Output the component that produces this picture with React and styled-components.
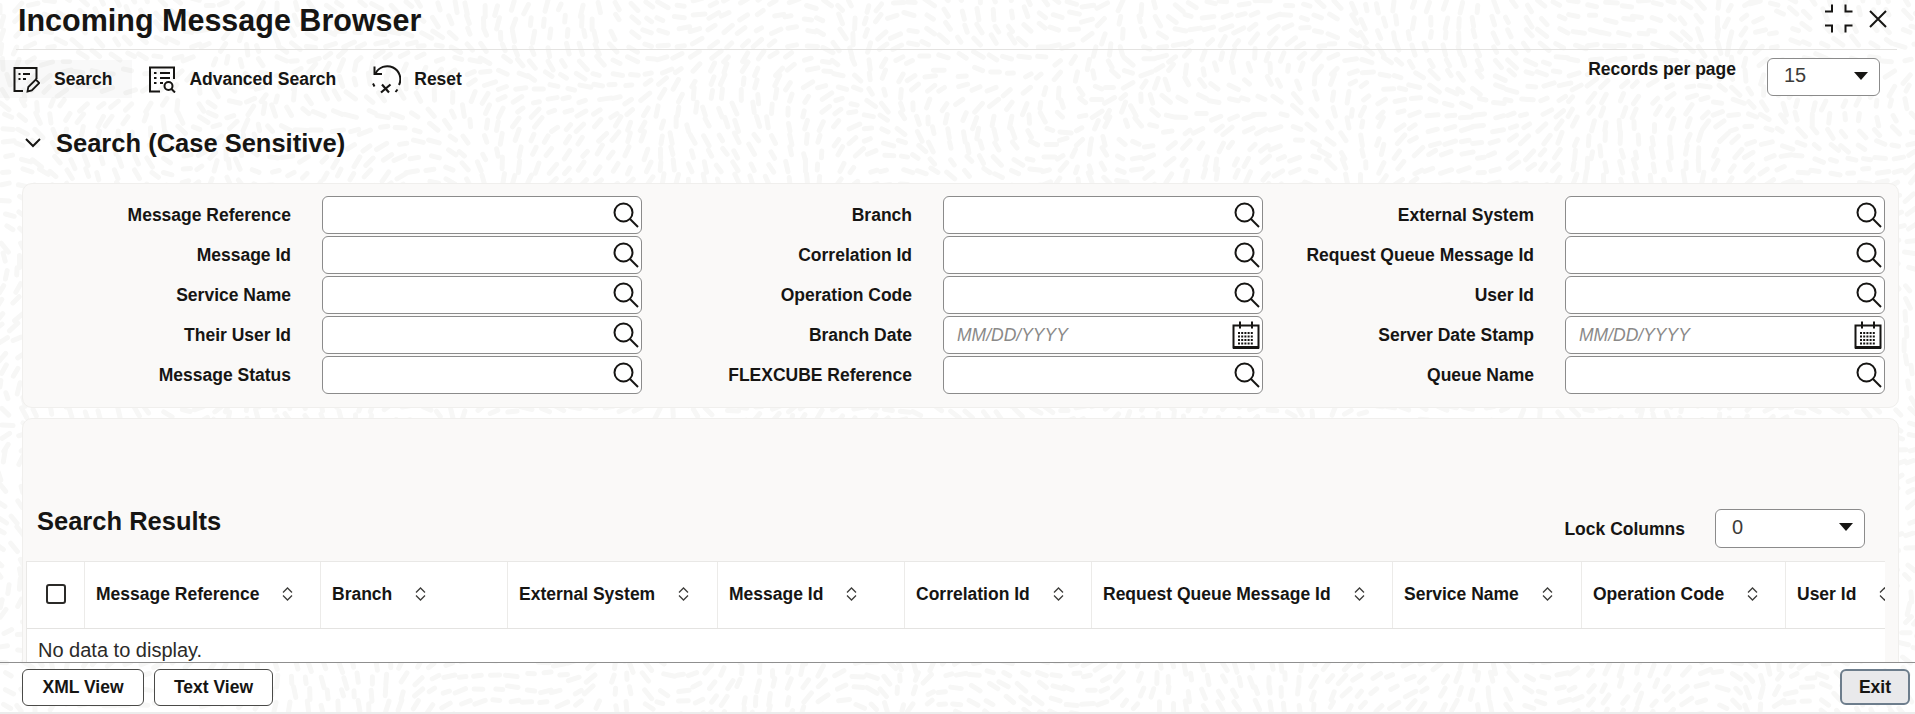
import React, { useMemo } from 'react'
import styled, { createGlobalStyle } from 'styled-components'

const GlobalStyle = createGlobalStyle`
  html, body { margin: 0; padding: 0; background: #fff; }
  body {
    font-family: "Liberation Sans", Arial, sans-serif;
    color: #161513;
  }
`;

const Page = styled.div`
  position: relative;
  width: 1915px;
  height: 714px;
  display: flex;
  flex-direction: column;
  overflow: hidden;
`;

const Backdrop = styled.svg`
  position: absolute;
  inset: 0;
  z-index: 0;
`;

const Main = styled.main`
  position: relative;
  flex: 1;
  min-height: 0;
  overflow: hidden;
`;

const TitleBar = styled.header`
  height: 49px;
  margin: 0 18px 0 16px;
  border-bottom: 1px solid #e4e3e1;
  display: flex;
  align-items: center;
  justify-content: space-between;
  padding: 0 10px 0 2px;
`;

const Title = styled.h1`
  margin: 0 0 10px;
  font-size: 30.5px;
  line-height: 40px;
  font-weight: 700;
`;

const WindowIcons = styled.div`
  display: flex;
  align-items: center;
  gap: 16px;
  margin-bottom: 12px;
`;

const Toolbar = styled.div`
  margin-top: 10px;
  height: 38px;
  display: flex;
  align-items: flex-start;
  justify-content: space-between;
  padding-right: 35px;
`;

const Actions = styled.div`
  display: flex;
`;

const Action = styled.div`
  height: 38px;
  display: flex;
  align-items: center;
  gap: ${(props) => (props.$active ? "14px" : "13px")};
  padding: ${(props) => (props.$active ? "0 20px 0 13px" : "0 19px 0 17px")};
  background: ${(props) => (props.$active ? "rgba(0,0,0,0.025)" : "transparent")};
  font-size: 17.5px;
  font-weight: 700;
`;

const RecordsBox = styled.div`
  display: flex;
  align-items: flex-start;
  gap: 31px;
  margin-top: -2px;
`;

const SideLabel = styled.span`
  font-size: 17.5px;
  font-weight: 700;
  line-height: 22px;
`;

const SelectBox = styled.div`
  box-sizing: border-box;
  width: ${(props) => props.$width};
  height: ${(props) => props.$height};
  border: 1px solid #8b8b8b;
  border-radius: 6px;
  background: #fff;
  display: flex;
  align-items: center;
  justify-content: space-between;
  padding: 0 11px 3px 16px;
  font-size: 20px;
  color: #3d3c3a;
`;

const Caret = styled.span`
  width: 0;
  height: 0;
  border-left: 7px solid transparent;
  border-right: 7px solid transparent;
  border-top: 8px solid #161513;
`;

const SectionHead = styled.div`
  margin-top: 30px;
  height: 30px;
  display: flex;
  align-items: center;
  gap: 14px;
  padding-left: 24px;
`;

const SectionTitle = styled.h2`
  margin: 0;
  font-size: 25.5px;
  font-weight: 700;
  line-height: 30px;
`;

const SearchPanel = styled.section`
  box-sizing: border-box;
  margin: 25px 16px 0 22px;
  height: 225px;
  padding-top: 12px;
  background: #faf9f8;
  border: 1px solid #f0efed;
  border-radius: 10px;
  display: grid;
  grid-template-columns: 621px 622px 621px;
  grid-auto-rows: 38px;
  row-gap: 2px;
`;

const Field = styled.div`
  display: flex;
  align-items: center;
  gap: 31px;
`;

const FieldLabel = styled.label`
  width: 268px;
  text-align: right;
  font-size: 17.5px;
  font-weight: 700;
  white-space: nowrap;
`;

const InputWrap = styled.div`
  box-sizing: border-box;
  width: 320px;
  height: 38px;
  background: #fff;
  border: 1px solid #8b8b8b;
  border-radius: 6px;
  display: flex;
  align-items: center;
  padding: 0 2px 0 13px;
`;

const Input = styled.input`
  flex: 1;
  min-width: 0;
  border: none;
  outline: none;
  background: transparent;
  padding: 0;
  font-family: inherit;
  font-size: 17.5px;
  &::placeholder {
    color: #8a8988;
    font-style: italic;
    opacity: 1;
  }
`;

const ResultsPanel = styled.section`
  box-sizing: border-box;
  margin: 10px 16px 0 22px;
  height: 300px;
  padding: 90px 13px 0 3px;
  background: #faf9f8;
  border: 1px solid #f0efed;
  border-radius: 10px 10px 0 0;
`;

const ResultsHead = styled.div`
  height: 39px;
  margin-bottom: 13px;
  display: flex;
  justify-content: space-between;
  align-items: flex-start;
  padding: 0 20px 0 11px;
`;

const ResultsTitle = styled.h2`
  margin: 0;
  font-size: 25.5px;
  line-height: 25px;
  font-weight: 700;
`;

const LockBox = styled.div`
  display: flex;
  align-items: center;
  gap: 30px;
`;

const Table = styled.div`
  background: #fff;
  border: 1px solid #e9e8e6;
  border-right: none;
  overflow: hidden;
  height: 120px;
`;

const HeaderRow = styled.div`
  display: flex;
  height: 66px;
  border-bottom: 1px solid #e4e3e1;
`;

const HeaderCell = styled.div`
  box-sizing: border-box;
  flex: none;
  width: ${(props) => props.$width}px;
  display: flex;
  align-items: center;
  gap: 23px;
  padding: 0 0 2px 11px;
  border-right: 1px solid #ecebe9;
  font-size: 17.5px;
  font-weight: 700;
  white-space: nowrap;
`;

const CheckCell = styled.div`
  box-sizing: border-box;
  flex: none;
  width: 58px;
  display: flex;
  align-items: center;
  justify-content: center;
  padding-bottom: 2px;
  border-right: 1px solid #ecebe9;
`;

const CheckBox = styled.span`
  box-sizing: border-box;
  width: 20px;
  height: 20px;
  border: 2px solid #2b2a28;
  border-radius: 3px;
`;

const EmptyRow = styled.div`
  padding-left: 11px;
  font-size: 20px;
  line-height: 42px;
  color: #2b2a28;
`;

const Footer = styled.footer`
  position: relative;
  box-sizing: border-box;
  height: 50px;
  border-top: 1px solid #8f8f8f;
  display: flex;
  align-items: center;
  justify-content: space-between;
  padding: 0 5px 1px 22px;
`;

const FooterLeft = styled.div`
  display: flex;
  gap: 10px;
`;

const FooterButton = styled.button`
  box-sizing: border-box;
  width: ${(props) => props.$width};
  height: 37px;
  border: 1px solid #4a4a48;
  border-radius: 6px;
  background: #fff;
  padding: 0;
  font-family: inherit;
  font-size: 17.5px;
  font-weight: 700;
  color: #161513;
`;

const ExitButton = styled(FooterButton)`
  width: 70px;
  height: 36px;
  border: 2px solid #6d7d8c;
  background: #e9e9eb;
`;

const BottomBand = styled.div`
  position: relative;
  height: 2px;
  background: #ececec;
`;

const SearchGlyph = () => (
  <svg width="26" height="26" viewBox="0 0 26 26" fill="none" stroke="#161513" strokeWidth="2">
    <circle cx="10.500" cy="10.500" r="9" />
    <path d="M17 17l8 8" />
  </svg>
);

const CalendarGlyph = () => (
  <svg width="28" height="28" viewBox="0 0 28 28" fill="none" stroke="#161513">
    <path d="M1.500 4.500h25v22h-25z" strokeWidth="2" />
    <path d="M1 26.500h26" strokeWidth="3" />
    <path d="M8 0.500v7M20 0.500v7" strokeWidth="2" />
    <path d="M6 12h16M6 15.500h16M6 19h16M6 22.500h16" strokeWidth="2" strokeDasharray="2 1.200" />
  </svg>
);

const FormPenIcon = () => (
  <svg width="27" height="27" viewBox="0 0 27 27" fill="none" stroke="#161513" strokeWidth="2">
    <path d="M10 25H1.500V2H23.500V13" />
    <path d="M5.500 8h2M10 8h7M5.500 13h2M10 13h3" />
    <path d="M14.500 25.500l.8-4.500 7.500-7.500 3.500 3.500-7.500 7.500z" strokeWidth="1.800" />
  </svg>
);

const FormSearchIcon = () => (
  <svg width="27" height="27" viewBox="0 0 27 27" fill="none" stroke="#161513" strokeWidth="2">
    <path d="M11 25.500H1V1.500H25V13" />
    <path d="M5 7h2.500M11 7h10M5 12h2.500M11 12h10M5 17h2.500M11 17h3" />
    <circle cx="19.500" cy="20" r="4" />
    <path d="M22.500 23l3.500 3.500" />
  </svg>
);

const ResetIcon = () => (
  <svg width="29" height="29" viewBox="0 0 29 29" fill="none" stroke="#161513" strokeWidth="2">
    <path d="M3.500 8.500A12.500 12.500 0 0 1 27 20" />
    <path d="M2.500 1.500v7.500h7.500" />
    <path d="M1 18.500l1.500 3M25.500 24.500l-2 2.500" />
    <path d="M10 19.500l7 8M18.500 19.500l-9.500 8" strokeWidth="2.200" />
  </svg>
);

const CollapseIcon = () => (
  <svg width="29" height="29" viewBox="0 0 29 29" fill="none" stroke="#161513" strokeWidth="2">
    <path d="M1 7.500h7V0.500M21.500 0.500v7h7M1 21.500h7v7M21.500 28.500v-7h7" />
  </svg>
);

const CloseIcon = () => (
  <svg width="18" height="18" viewBox="0 0 18 18" fill="none" stroke="#161513" strokeWidth="2">
    <path d="M1 1l16 16M17 1L1 17" />
  </svg>
);

const ChevronIcon = () => (
  <svg width="18" height="10" viewBox="0 0 18 10" fill="none" stroke="#161513" strokeWidth="2">
    <path d="M2 1l7 7 7-7" />
  </svg>
);

const SortIcon = () => (
  <svg width="11" height="14" viewBox="0 0 11 14" fill="none" stroke="#3d3c3a" strokeWidth="1.300" style={{ flex: 'none' }}>
    <path d="M1 5.500L5.500 1 10 5.500M1 8.500L5.500 13 10 8.500" />
  </svg>
);

// light dashes that follow a slow swirl, same look as the page texture
const buildTexture = () => {
  let seed = 7;
  const rnd = () => {
    seed = (seed * 16807) % 2147483647;
    return seed / 2147483647;
  };
  let d = "";
  for (let y = 0; y < 730; y += 14) {
    for (let x = 0; x < 1930; x += 16) {
      const px = x + rnd() * 8;
      const py = y + rnd() * 6;
      const a =
        Math.sin(px / 70) * 1.6 +
        Math.cos(py / 55) * 1.6 +
        Math.sin((px + py) / 130) * 1.4 +
        (rnd() - 0.5) * 0.35;
      const len = 6 + rnd() * 6;
      const dx = Math.cos(a) * len;
      const dy = Math.sin(a) * len;
      d += `M${px.toFixed(1)} ${py.toFixed(1)}l${dx.toFixed(1)} ${dy.toFixed(1)}`;
    }
  }
  return d;
};

const fields = [
  { label: "Message Reference" },
  { label: "Branch" },
  { label: "External System" },
  { label: "Message Id" },
  { label: "Correlation Id" },
  { label: "Request Queue Message Id" },
  { label: "Service Name" },
  { label: "Operation Code" },
  { label: "User Id" },
  { label: "Their User Id" },
  { label: "Branch Date", date: true },
  { label: "Server Date Stamp", date: true },
  { label: "Message Status" },
  { label: "FLEXCUBE Reference" },
  { label: "Queue Name" },
];

const columns = [
  { name: "Message Reference", width: 236 },
  { name: "Branch", width: 187 },
  { name: "External System", width: 210 },
  { name: "Message Id", width: 187 },
  { name: "Correlation Id", width: 187 },
  { name: "Request Queue Message Id", width: 301 },
  { name: "Service Name", width: 189 },
  { name: "Operation Code", width: 204 },
  { name: "User Id", width: 140 },
];

function App() {
  const texture = useMemo(buildTexture, []);

  return (
    <Page>
      <GlobalStyle />
      <Backdrop width="1915" height="714" aria-hidden="true">
        <path d={texture} stroke="#f7f7f6" strokeWidth="5" strokeLinecap="round" fill="none" />
      </Backdrop>
      <Main>
        <TitleBar>
          <Title>Incoming Message Browser</Title>
          <WindowIcons>
            <CollapseIcon />
            <CloseIcon />
          </WindowIcons>
        </TitleBar>

        <Toolbar>
          <Actions>
            <Action $active>
              <FormPenIcon />
              Search
            </Action>
            <Action>
              <FormSearchIcon />
              Advanced Search
            </Action>
            <Action>
              <ResetIcon />
              Reset
            </Action>
          </Actions>
          <RecordsBox>
            <SideLabel>Records per page</SideLabel>
            <SelectBox $width="113px" $height="38px">
              15
              <Caret />
            </SelectBox>
          </RecordsBox>
        </Toolbar>

        <SectionHead>
          <ChevronIcon />
          <SectionTitle>Search (Case Sensitive)</SectionTitle>
        </SectionHead>

        <SearchPanel>
          {fields.map((f) => (
            <Field key={f.label}>
              <FieldLabel>{f.label}</FieldLabel>
              <InputWrap>
                <Input placeholder={f.date ? "MM/DD/YYYY" : undefined} />
                {f.date ? <CalendarGlyph /> : <SearchGlyph />}
              </InputWrap>
            </Field>
          ))}
        </SearchPanel>

        <ResultsPanel>
          <ResultsHead>
            <ResultsTitle>Search Results</ResultsTitle>
            <LockBox>
              <SideLabel>Lock Columns</SideLabel>
              <SelectBox $width="150px" $height="39px">
                0
                <Caret />
              </SelectBox>
            </LockBox>
          </ResultsHead>
          <Table>
            <HeaderRow>
              <CheckCell>
                <CheckBox />
              </CheckCell>
              {columns.map((c) => (
                <HeaderCell key={c.name} $width={c.width}>
                  {c.name}
                  <SortIcon />
                </HeaderCell>
              ))}
            </HeaderRow>
            <EmptyRow>No data to display.</EmptyRow>
          </Table>
        </ResultsPanel>
      </Main>

      <Footer>
        <FooterLeft>
          <FooterButton $width="122px">XML View</FooterButton>
          <FooterButton $width="119px">Text View</FooterButton>
        </FooterLeft>
        <ExitButton>Exit</ExitButton>
      </Footer>
      <BottomBand />
    </Page>
  )
}

export default App
